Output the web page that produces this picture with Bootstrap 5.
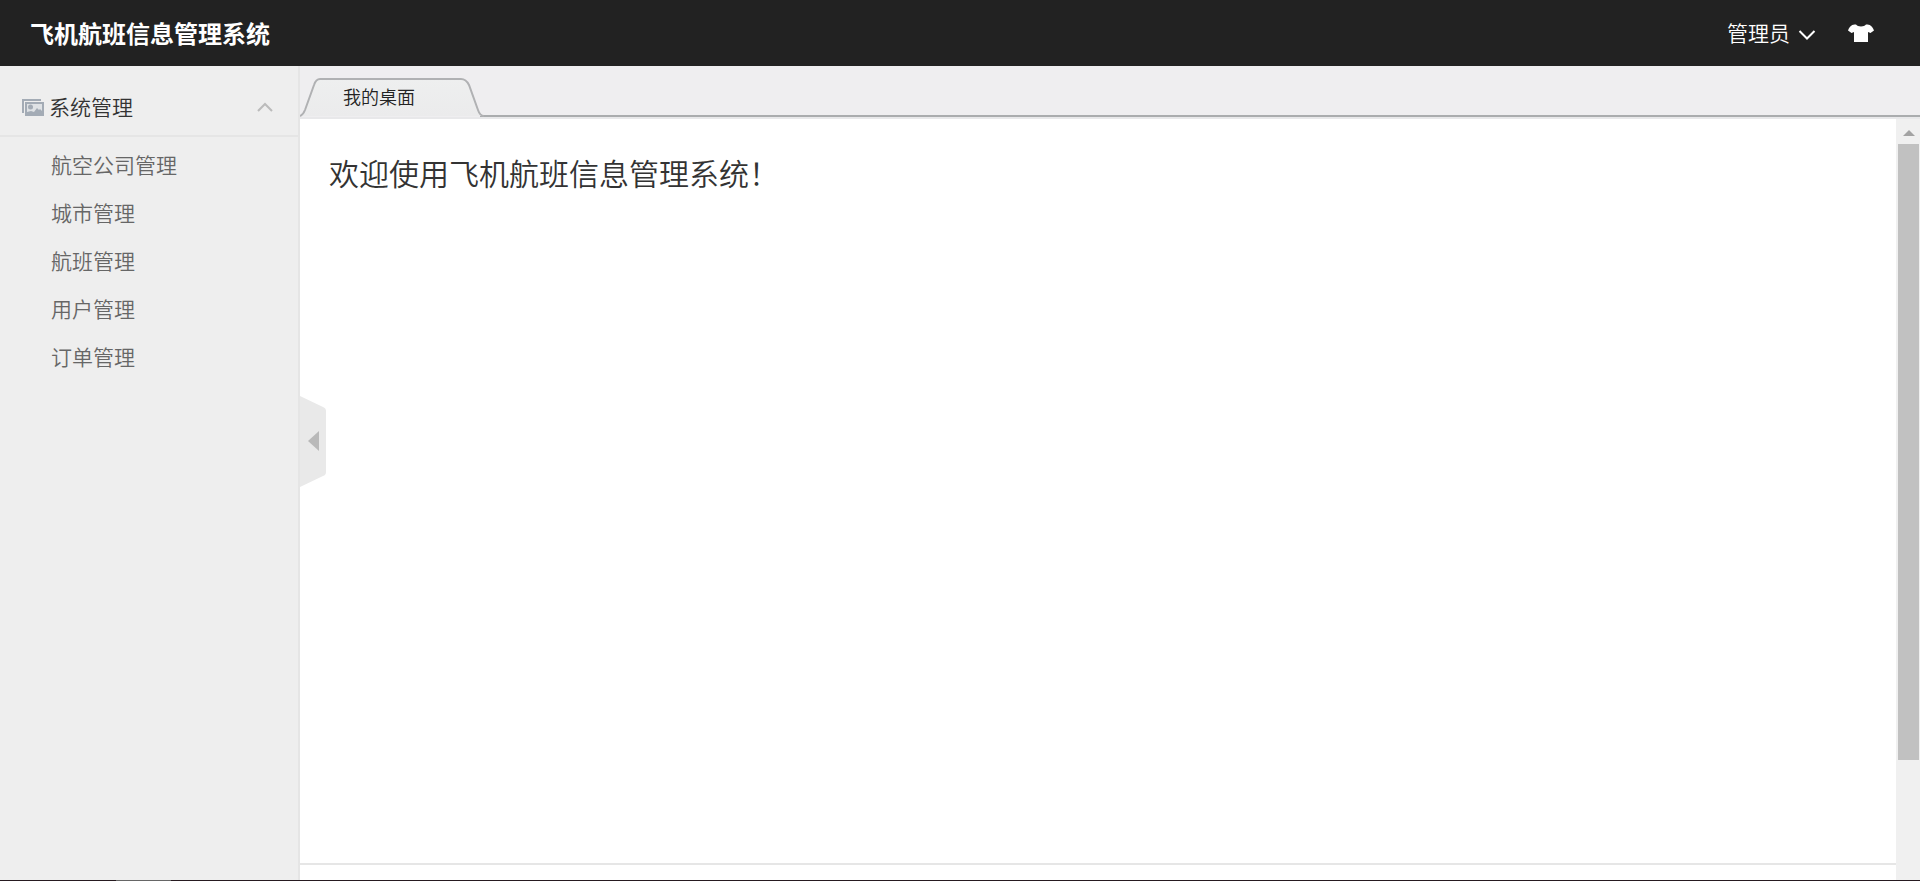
<!DOCTYPE html>
<html lang="zh-CN">
<head>
<meta charset="utf-8">
<meta name="viewport" content="width=device-width, initial-scale=1">
<title>飞机航班信息管理系统</title>
<link href="https://cdn.jsdelivr.net/npm/bootstrap@5.3.0/dist/css/bootstrap.min.css" rel="stylesheet">
<style>
body { font-family: "Noto Sans CJK SC", sans-serif; font-weight: 350; color: #333; line-height: 24px; }
svg { display: block; }
.topbar { height: 66px; background: #222; padding: 0 46px 0 30px; }
.brand { font-size: 24px; font-weight: 700; }
.user-btn { font-size: 21px; font-weight: 350; gap: 8px; }
.side { width: 300px; background: #eee; border-right: 2px solid #e5e5e5; }
.side-head { height: 71px; padding: 10px 24px 0 22px; border-bottom: 2px solid #e5e5e5; font-size: 21px; gap: 5px; }
.side-head svg { margin-top: 4px; }
.side-menu { padding: 3px 0; }
.side-menu a { display: block; padding-left: 51px; font-size: 21px; line-height: 48px; color: #666; }
.tabs { height: 53px; background: #efeef0; border-bottom: 2px solid #e8e8ea; }
.tabs-line { height: 2px; background: #aaacae; margin-left: 180px; }
.tab-on { top: 11px; left: 0; width: 184px; height: 40px; }
.tab-on svg { top: 0; left: 0; }
.tab-on a { font-size: 18px; color: #222; padding: 7px 0 0 43px; }
.welcome { font-size: 30px; line-height: 45px; font-weight: 350; color: #333; padding: 31px 29px; }
.foot { height: 17px; border-top: 2px solid #e6e6e6; }
.scroller { width: 24px; background: #f0f0f0; padding: 0 1px 0 2px; }
.scroll-up { height: 25px; padding: 10px 0 0 5px; }
.thumb { height: 81%; background: #c1c1c1; }
.fold { left: 0; top: 277px; }
.edge { height: 1px; background: #261a20; padding-left: 116px; }
.edge-mark { width: 55px; height: 1px; background: #666; }
</style>
</head>
<body class="vh-100 d-flex flex-column overflow-hidden">
<header class="topbar d-flex align-items-center justify-content-between flex-shrink-0">
  <a href="#" class="brand text-white text-decoration-none">飞机航班信息管理系统</a>
  <div class="d-flex align-items-center">
    <button type="button" class="user-btn btn p-0 border-0 text-white d-flex align-items-center me-4">管理员
      <svg width="18" height="18" viewBox="0 0 18 18" fill="none" stroke="#fff" stroke-width="2"><path d="M1.500 7 9 14.500 16.500 7"/></svg>
    </button>
    <button type="button" class="btn p-0 border-0 ms-2" aria-label="换肤">
      <svg width="26" height="18" viewBox="0 0 26 18" fill="#fff"><path d="M8 0.500c1.500 2.600 8.500 2.600 10 0 4 0 6 1 8 6l-3.500 2.500-2.500-1V18H6V8L3.500 9 0 6.500C2 1.500 4 .5 8 .5z"/></svg>
    </button>
  </div>
</header>
<div class="d-flex flex-grow-1 overflow-hidden">
  <aside class="side flex-shrink-0">
    <div class="side-head d-flex align-items-center">
      <svg width="22" height="17" viewBox="0 0 22 17"><path d="M1 14V1h18" fill="none" stroke="#a3abb5" stroke-width="2"/><rect x="3" y="3" width="19" height="14" fill="#a3abb5"/><rect x="5" y="5" width="15" height="10" fill="#dfe2e5"/><circle cx="8.500" cy="8" r="2.500" fill="#a3abb5"/><path d="M5 15v-2l4-1 3 1 3-4 2 2 1-1 2 2v3z" fill="#a3abb5"/></svg>
      <span class="flex-grow-1">系统管理</span>
      <svg width="18" height="12" viewBox="0 0 18 12" fill="none" stroke="#bbb" stroke-width="2"><path d="M2 9 9 2l7 7"/></svg>
    </div>
    <nav class="side-menu">
      <a href="#" class="text-decoration-none">航空公司管理</a>
      <a href="#" class="text-decoration-none">城市管理</a>
      <a href="#" class="text-decoration-none">航班管理</a>
      <a href="#" class="text-decoration-none">用户管理</a>
      <a href="#" class="text-decoration-none">订单管理</a>
    </nav>
  </aside>
  <div class="flex-grow-1 d-flex flex-column">
    <div class="tabs position-relative d-flex flex-column justify-content-end flex-shrink-0">
      <div class="tabs-line"></div>
      <div class="tab-on position-absolute">
        <svg class="position-absolute" width="184" height="40" viewBox="0 0 184 40">
          <defs><linearGradient id="tg" x1="0" y1="0" x2="0" y2="1"><stop offset="0" stop-color="#eeefef"/><stop offset="1" stop-color="#ebebec"/></linearGradient></defs>
          <path d="M0 39Q3 38 5 33L14 8Q16 2 20 2H161Q166 2 169 8L178 33Q180 39 184 39" fill="url(#tg)" stroke="#b0b1b3" stroke-width="2"/>
        </svg>
        <a href="#" class="position-relative d-block text-decoration-none">我的桌面</a>
      </div>
    </div>
    <div class="flex-grow-1 d-flex position-relative">
      <div class="flex-grow-1 d-flex flex-column">
        <main class="flex-grow-1"><h1 class="welcome m-0">欢迎使用飞机航班信息管理系统！</h1></main>
        <footer class="foot"></footer>
      </div>
      <div class="scroller">
        <div class="scroll-up"><svg width="12" height="7" viewBox="0 0 12 7"><path d="M0 7 6 1l6 6z" fill="#a3a3a3"/></svg></div>
        <div class="thumb"></div>
      </div>
      <button type="button" class="fold btn p-0 border-0 position-absolute" aria-label="收起菜单">
        <svg width="26" height="91" viewBox="0 0 26 91"><path d="M0 0 23 11q3 1 3 4v61q0 3-3 4L0 91z" fill="#e9e9e9"/><path d="M8 45 19 35v20z" fill="#b9b9b9"/></svg>
      </button>
    </div>
  </div>
</div>
<div class="edge flex-shrink-0"><div class="edge-mark"></div></div>
<script src="https://cdn.jsdelivr.net/npm/bootstrap@5.3.0/dist/js/bootstrap.bundle.min.js"></script>
</body>
</html>
